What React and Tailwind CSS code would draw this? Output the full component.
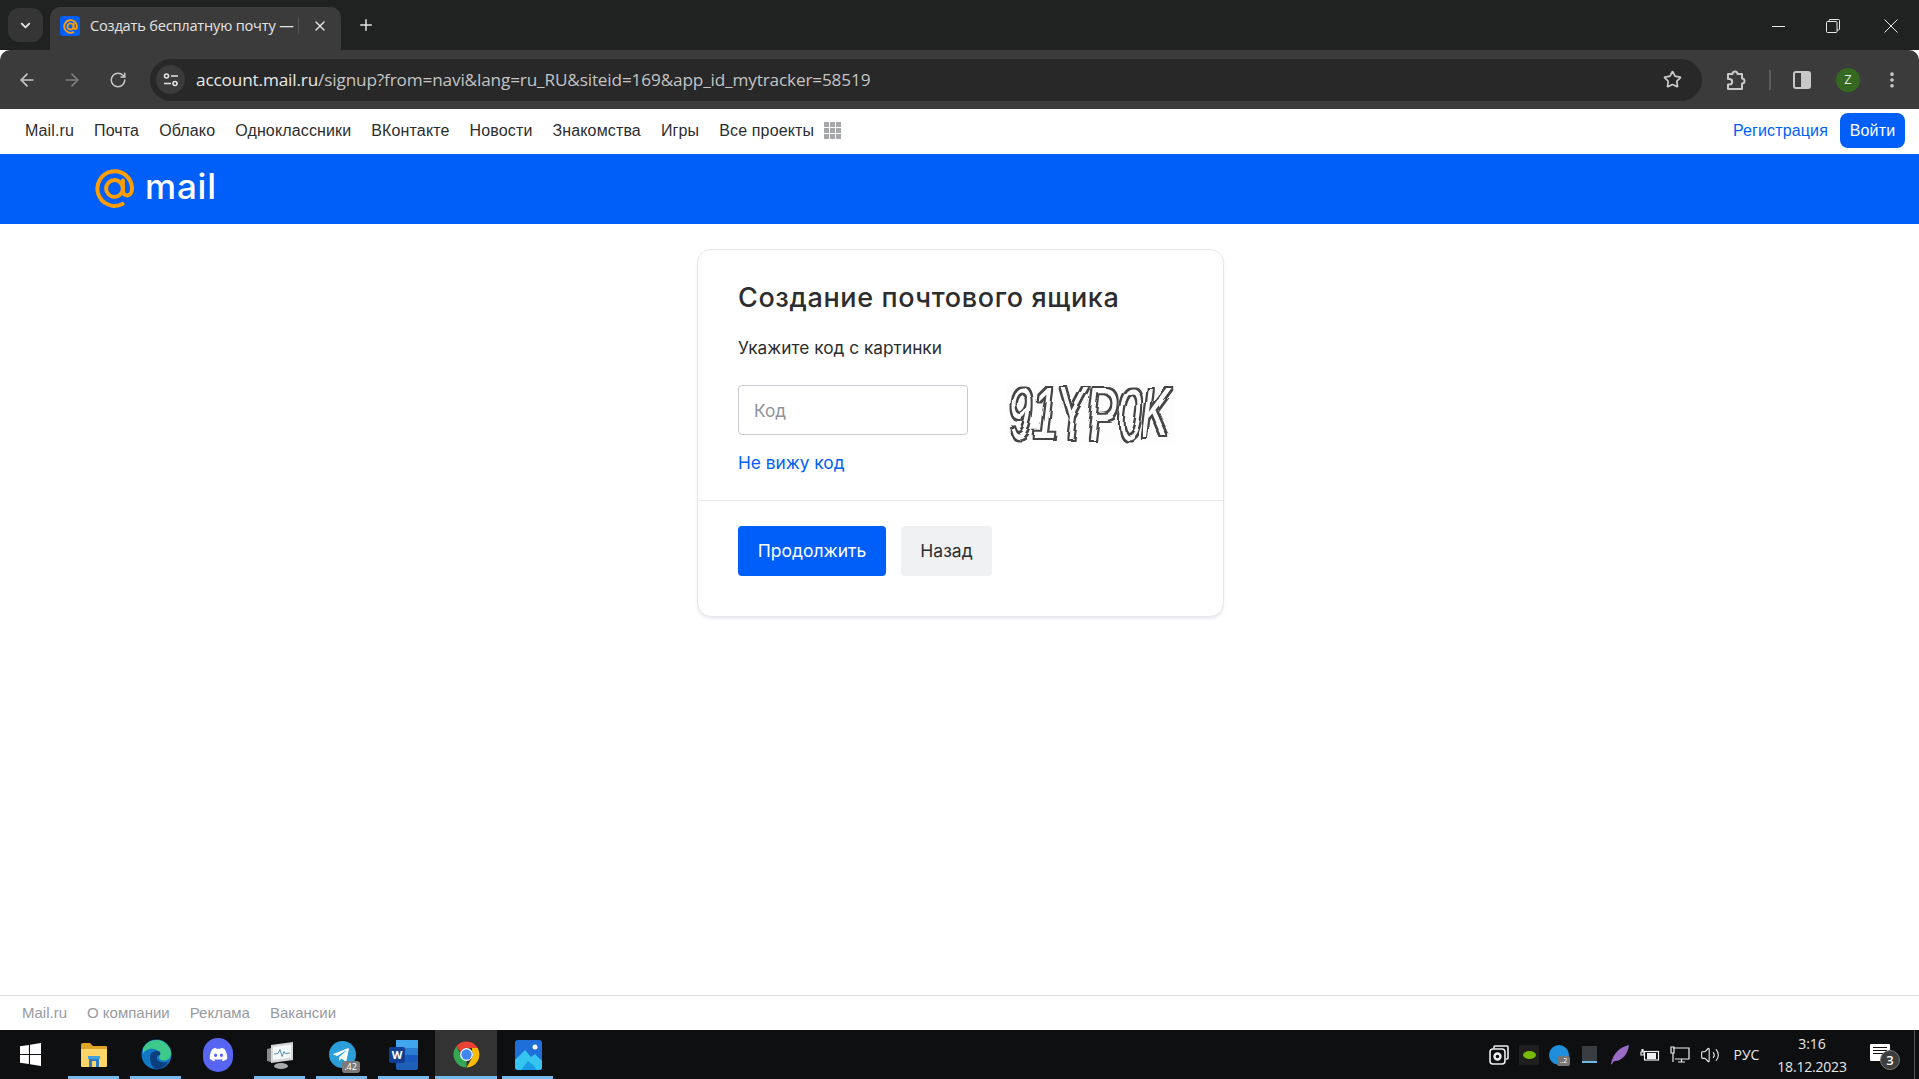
import React from "react";
import {
  ArrowLeft,
  ArrowRight,
  RotateCw,
  Star,
  EllipsisVertical,
  ChevronDown,
  X,
  Plus,
  Volume2,
} from "lucide-react";
import { FaDiscord, FaTelegramPlane } from "react-icons/fa";

const navLinks = ["Mail.ru", "Почта", "Облако", "Одноклассники", "ВКонтакте", "Новости", "Знакомства", "Игры", "Все проекты"];
const footerLinks = ["Mail.ru", "О компании", "Реклама", "Вакансии"];

const AtSign = ({ className, width = 4 }) => (
  <svg viewBox="0 0 41 39" className={className} fill="none" stroke="#ff9e00" strokeWidth={width} strokeLinecap="round">
    <circle cx="20.5" cy="19.5" r="8.4" />
    <path d="M28.5 35 A17.3 17.3 0 1 1 38 19.5 C38 24 36 26.4 33.2 26.4 C30.4 26.4 28.9 24.4 28.9 21.4 L28.9 11.5" />
  </svg>
);

const WindowControls = () => (
  <div className="ml-auto flex items-center h-[48px] text-[#e8e8e8]">
    <div className="w-[50px] flex justify-center">
      <div className="w-[13px] h-px bg-[#e8e8e8]" />
    </div>
    <div className="w-[60px] flex justify-center">
      <svg width="14" height="14" viewBox="0 0 14 14" fill="none" stroke="#e8e8e8">
        <rect x="0.5" y="2.5" width="10.5" height="11" rx="1" />
        <path d="M3 2.5V1.5a1 1 0 0 1 1-1h8.5a1 1 0 0 1 1 1V10a1 1 0 0 1-1 1H11" />
      </svg>
    </div>
    <div className="w-[56px] flex justify-center">
      <svg width="14" height="14" viewBox="0 0 14 14" stroke="#e8e8e8">
        <path d="M0.5 0.5l13 13M13.5 0.5l-13 13" />
      </svg>
    </div>
  </div>
);

const TabStrip = () => (
  <div className="h-[50px] bg-[#202221] flex items-end pl-2">
    <div className="w-[35px] h-[34px] mb-[8px] rounded-[11px] bg-[#343534] flex items-center justify-center">
      <ChevronDown size={15} strokeWidth={3} className="text-[#e4e4e4]" />
    </div>
    <div className="relative ml-[7px] w-[291px] h-[43px] bg-[#3b3b3b] rounded-t-[10px] flex items-center pl-[10px] pb-[5px]">
      <div className="w-[20px] h-[20px] rounded-[3px] bg-[#005ff9] flex items-center justify-center">
        <AtSign className="w-[15px] h-[15px]" width={5} />
      </div>
      <div className="ml-[10px] w-[204px] overflow-hidden whitespace-nowrap font-['Open_Sans',sans-serif] text-[14.6px] tracking-[-0.2px] text-[#e3e3e3]">
        Создать бесплатную почту — Mail
      </div>
      <div className="ml-[4px] w-px h-[16px] bg-[#555]" />
      <X size={16} strokeWidth={2} className="ml-[13px] text-[#e3e3e3]" />
    </div>
    <Plus size={18} strokeWidth={2} className="ml-[16px] mb-[16px] text-[#e3e3e3]" />
    <WindowControls />
  </div>
);

const Toolbar = () => (
  <div className="h-[59px] bg-[#3b3b3b] rounded-t-[10px] flex items-center pl-[17px]">
    <ArrowLeft size={20} strokeWidth={2} className="text-[#c8c8c8]" />
    <ArrowRight size={20} strokeWidth={2} className="ml-[25px] text-[#7f7f7f]" />
    <RotateCw size={18} strokeWidth={2} className="ml-[27px] text-[#c8c8c8]" />
    <div className="ml-[23px] w-[1552px] h-[42px] rounded-full bg-[#282828] flex items-center pl-[6px]">
      <div className="w-[29px] h-[29px] rounded-full bg-[#3b3b3b] flex items-center justify-center">
        <svg width="16" height="14" viewBox="0 0 16 14" fill="none" stroke="#e3e3e3" strokeWidth="1.6">
          <circle cx="3.5" cy="3" r="2" />
          <path d="M8 3h7M1 10.5h7" />
          <circle cx="12" cy="10.5" r="2" />
        </svg>
      </div>
      <div className="ml-[11px] font-['Open_Sans',sans-serif] text-[17.2px] whitespace-nowrap text-[#c4c4c4] tracking-[-0.15px]">
        <span className="text-[#e8e8e8]">account.mail.ru</span>/signup?from=navi&amp;lang=ru_RU&amp;siteid=169&amp;app_id_mytracker=58519
      </div>
      <Star size={19} strokeWidth={2.2} className="ml-auto mr-[20px] text-[#c8c8c8]" />
    </div>
    <svg width="22" height="22" viewBox="0 0 22 22" fill="none" stroke="#c8c8c8" strokeWidth="2" strokeLinejoin="round" className="ml-[23px]">
      <path d="M3 5h4.500a2.500 2.500 0 0 1 5 0H17v4.500a2.500 2.500 0 0 1 0 5V20H3v-4.500h1.500a2.700 2.700 0 0 0 0-5.400H3z" />
    </svg>
    <div className="ml-[22px] w-[2px] h-[20px] bg-[#5c5c5c]" />
    <div className="ml-[22px] w-[18px] h-[18px] rounded-[3px] border-2 border-[#c8c8c8] flex justify-end">
      <div className="w-[8px] bg-[#c8c8c8]" />
    </div>
    <div className="ml-[25px] w-[24px] h-[24px] rounded-full bg-[#35691f] flex items-center justify-center text-[#e8e8e8] text-[13px] font-['Open_Sans',sans-serif]">
      Z
    </div>
    <EllipsisVertical size={20} strokeWidth={2.4} className="ml-[22px] text-[#c8c8c8]" />
  </div>
);

const ProjectNav = () => (
  <div className="h-[45px] bg-white flex items-center pl-[25px] pr-[14px] pb-[2px] font-['Liberation_Sans',Arial,sans-serif] text-[16px] tracking-[0.14px] text-[#2c2d2e]">
    <div className="flex items-center gap-5">
      {navLinks.map((link) => (
        <span key={link}>{link}</span>
      ))}
    </div>
    <div className="ml-[10px] grid grid-cols-3 gap-[1px]">
      {Array.from({ length: 9 }).map((_, i) => (
        <div key={i} className="w-[5px] h-[5px] bg-[#a5a7ab]" />
      ))}
    </div>
    <span className="ml-auto text-[#005ff9]">Регистрация</span>
    <div className="ml-3 w-[65px] h-[35px] rounded-lg bg-[#005ff9] text-white flex items-center justify-center">Войти</div>
  </div>
);

const LogoBar = () => (
  <div className="h-[70px] bg-[#005ff9] flex items-start pl-[94px] pt-[15px]">
    <AtSign className="w-[41px] h-[39px]" />
    <span className="ml-[10px] -mt-[7px] font-['Inter',sans-serif] font-medium text-[35px] leading-[48px] tracking-[0.8px] text-white">mail</span>
  </div>
);

// the captcha is one distorted text line: a ring around the letters, wobbled by noise
const Captcha = () => (
  <div className="w-[168px] h-[65px] bg-[#fdfdfd] ml-[39px] -mt-[5px] -mb-[10px]">
    <svg viewBox="0 0 168 65" className="w-full h-full">
      <defs>
        <filter id="wobble" x="-10%" y="-20%" width="120%" height="140%">
          <feMorphology in="SourceGraphic" operator="dilate" radius="1.7" result="fat" />
          <feComposite in="fat" in2="SourceGraphic" operator="out" result="ring" />
          <feTurbulence type="fractalNoise" baseFrequency="0.025" numOctaves="1" seed="8" result="noise" />
          <feDisplacementMap in="ring" in2="noise" scale="16" />
        </filter>
      </defs>
      <text
        x="2"
        y="58"
        filter="url(#wobble)"
        fontFamily="'Liberation Sans', sans-serif"
        fontStyle="italic"
        fontSize="70"
        fill="#444444"
        textLength="162"
        lengthAdjust="spacingAndGlyphs"
      >
        91YP0K
      </text>
    </svg>
  </div>
);

const SignupCard = () => (
  <div className="pl-[2px] pt-[25px]">
    <div className="w-[527px] h-[368px] mx-auto border border-[#e7e8ea] rounded-[14px] shadow-[0_2px_3px_rgba(0,16,61,0.08)] bg-white flex flex-col font-['Inter',sans-serif] text-[#2c2d2e]">
      <div className="pl-[40px] pr-[39px] pt-[30px] border-b border-[#e7e8ea] h-[251px]">
        <h1 className="text-[27px] leading-[36px] font-medium tracking-[0.62px] whitespace-nowrap">Создание почтового ящика</h1>
        <p className="mt-[20px] text-[17.3px] leading-[24px]">Укажите код с картинки</p>
        <div className="mt-[25px] flex items-start">
          <input
            placeholder="Код"
            className="w-[230px] h-[50px] rounded-[4px] border border-[#c9cbd0] px-[15px] text-[17.3px] placeholder:text-[#8f9299] outline-none"
          />
          <Captcha />
        </div>
        <a className="block mt-[16px] text-[17.3px] leading-[24px] text-[#005ff9]">Не вижу код</a>
      </div>
      <div className="pl-[40px] pr-[39px] pt-[25px] flex gap-[15px]">
        <button className="w-[148px] h-[50px] rounded-[4px] bg-[#005ff9] text-white text-[17.5px]">Продолжить</button>
        <button className="w-[91px] h-[50px] rounded-[4px] bg-[#f0f1f3] text-[17.5px]">Назад</button>
      </div>
    </div>
  </div>
);

const Footer = () => (
  <div className="h-[35px] border-t border-[#dcdddf] bg-white flex items-center gap-5 pl-[22px] font-['Liberation_Sans',Arial,sans-serif] text-[15px] text-[#979a9f]">
    {footerLinks.map((link) => (
      <span key={link}>{link}</span>
    ))}
  </div>
);

const TaskSlot = ({ open, active, children }) => (
  <div className={`relative w-[62px] h-full flex items-center justify-center ${active ? "bg-[#333333]" : ""}`}>
    {children}
    {open && <div className={`absolute bottom-0 h-[3px] bg-[#76b9ed] ${active ? "left-0 right-0" : "left-[5px] right-[6px]"}`} />}
  </div>
);

const ChromeIcon = () => (
  <svg width="31" height="31" viewBox="0 0 48 48">
    <path d="M24 4a20 20 0 0 1 17.3 10H24a10 10 0 0 0-9.3 6.3L8.2 11.8A20 20 0 0 1 24 4z" fill="#ea4335" />
    <path d="M41.3 14A20 20 0 0 1 24 44l8.6-15a10 10 0 0 0 .1-10l-.1-5z" fill="#fbbc04" />
    <path d="M8.2 11.8l8.7 15a10 10 0 0 0 7.1 7.2h.1L24 44A20 20 0 0 1 8.2 11.8z" fill="#34a853" />
    <circle cx="24" cy="24" r="10" fill="#fff" />
    <circle cx="24" cy="24" r="8" fill="#4285f4" />
  </svg>
);

const TrayIcons = () => (
  <div className="flex items-center gap-[10px]">
    <svg width="20" height="20" viewBox="0 0 20 20" fill="none" stroke="#eee" strokeWidth="1.6">
      <path d="M5 3.500V2a1 1 0 0 1 1-1h12a1 1 0 0 1 1 1v11a1 1 0 0 1-1 1h-1" />
      <rect x="1" y="4" width="15" height="15" rx="3" />
      <circle cx="8.500" cy="11.500" r="3" strokeWidth="2.4" />
    </svg>
    <div className="w-[20px] h-[20px] bg-[#1e1f1e] flex items-center justify-center">
      <div className="w-[13px] h-[8px] rounded-[50%] bg-[#76b900]" />
    </div>
    <div className="relative w-[20px] h-[20px] rounded-full bg-[#1f8fdc]">
      <div className="absolute -right-[1px] -bottom-[1px] w-[13px] h-[10px] rounded-[2px] bg-[#777] text-[7px] leading-[10px] text-center text-white">..2</div>
    </div>
    <div className="w-[15px] h-[17px] mx-[3px] bg-[#3a3d40] border-b-2 border-[#6fb9ea]" />
    <svg width="20" height="20" viewBox="0 0 20 20">
      <path d="M19 0C10 2 3 8 1 19c0 .5 1 .5 1 0 1-2 2-3 3-3 7 0 13-7 14-16z" fill="#9a6ac9" />
    </svg>
    <svg width="20" height="14" viewBox="0 0 20 14" fill="none" stroke="#eee" strokeWidth="1.2">
      <rect x="4.500" y="3.500" width="14" height="8.500" />
      <rect x="7" y="5" width="9" height="6" fill="#eee" stroke="none" />
      <path d="M1 4h3v3H1zM2 1v3M3 1v3" />
    </svg>
    <svg width="20" height="17" viewBox="0 0 20 17" fill="none" stroke="#eee" strokeWidth="1.2">
      <path d="M3 2h16v11H5" />
      <path d="M1 1h3v6H1zM3 7v9M8 16h7M11.500 13v3" />
    </svg>
    <Volume2 size={20} strokeWidth={1.3} className="text-[#eee]" />
  </div>
);

const Taskbar = () => (
  <div className="h-[49px] bg-[#0e0f10] flex items-center text-[#e8e8e8] font-['Open_Sans',sans-serif]">
    <div className="w-[63px] h-full flex items-center pl-[20px]">
      <svg width="21" height="23" viewBox="0 0 21 23" fill="#fff">
        <path d="M0 3.3l8.9-1.3v9H0zM10 1.8L21 0v11h-11zM0 12h8.9v9L0 19.7zM10 12h11v11l-11-1.8z" />
      </svg>
    </div>
    <TaskSlot open>
      <svg width="28" height="26" viewBox="0 0 28 26">
        <path d="M1 3a2 2 0 0 1 2-2h7l3 3h13a1 1 0 0 1 1 1v3H1z" fill="#e0a526" />
        <path d="M1 7h26v17a1 1 0 0 1-1 1H2a1 1 0 0 1-1-1z" fill="#fdd569" />
        <path d="M8 14h12v3H8z" fill="#3f9fe0" />
        <path d="M9 17h10v8H9z" fill="#2b7cc2" />
        <path d="M12 19h4v6h-4z" fill="#fdd569" />
      </svg>
    </TaskSlot>
    <TaskSlot open>
      <svg width="31" height="31" viewBox="0 0 31 31">
        <circle cx="15.5" cy="15.5" r="15" fill="#1277c4" />
        <path d="M2 9A15 15 0 0 1 30 13c.8 5-2.5 8.5-7 8.5-3 0-5-1-5-3 1-3 2-6-3-8C9 8.500 4 11 2 15z" fill="#3dc98a" />
        <path d="M9 18c0-4 3-6 7-6 3 0 4 2 3 4-4 0-5 5 1 7 3 1 5 .6 7-.5A15 15 0 0 1 15 30.500C10 28 9 22 9 18z" fill="#0b3f7d" />
      </svg>
    </TaskSlot>
    <TaskSlot>
      <div className="w-[30px] h-[34px] rounded-full bg-[#5865f2] flex items-center justify-center">
        <FaDiscord size={19} className="text-white" />
      </div>
    </TaskSlot>
    <TaskSlot open>
      <svg width="28" height="30" viewBox="0 0 28 30">
        <ellipse cx="15" cy="26" rx="7" ry="3" fill="#a9a9a9" />
        <path d="M5 5l22-3v18l-22 3z" fill="#d5d5d5" />
        <path d="M7 7l18-2.500v13l-18 2.500z" fill="#f4f7f8" />
        <path d="M8 14l4-.5 2-4 2 7 2-5 1 2 5-.5" fill="none" stroke="#5a93b5" strokeWidth="1" />
        <path d="M1 9l4-1v14l-4-1z" fill="#8a8a8a" />
      </svg>
    </TaskSlot>
    <TaskSlot open>
      <div className="relative">
        <div className="w-[27px] h-[27px] rounded-full bg-[#2a9fd9] flex items-center justify-center">
          <FaTelegramPlane size={18} className="text-white -ml-[2px]" />
        </div>
        <div className="absolute -right-[4px] -bottom-[5px] w-[18px] h-[12px] rounded-[3px] bg-[#7a7a7a] text-[9px] leading-[12px] text-center text-white">.42</div>
      </div>
    </TaskSlot>
    <TaskSlot open>
      <div className="relative w-[29px] h-[30px] -ml-[1px]">
        <div className="absolute right-0 top-0 w-[22px] h-[30px] rounded-[2px] bg-[#1f5fb8]">
          <div className="h-[8px] bg-[#41a5ee]" />
          <div className="h-[7px] bg-[#2b7cd3]" />
          <div className="h-[7px] bg-[#185abd]" />
        </div>
        <div className="absolute left-0 top-[7px] w-[16px] h-[16px] rounded-[2px] bg-[#103f91] text-white text-[11px] leading-[16px] text-center font-bold">W</div>
      </div>
    </TaskSlot>
    <TaskSlot open active>
      <ChromeIcon />
    </TaskSlot>
    <TaskSlot open>
      <svg width="27" height="30" viewBox="0 0 27 30">
        <rect width="27" height="30" rx="3" fill="#1f6fd8" />
        <path d="M0 27V20L10 10l6 7 4-3 7 7v6a3 3 0 0 1-3 3H3a3 3 0 0 1-3-3z" fill="#35c5f0" />
        <path d="M6 30l7-9 5 4 4 5z" fill="#1a9be6" />
        <circle cx="20" cy="7" r="2.500" fill="#fff" />
      </svg>
    </TaskSlot>
    <div className="ml-auto flex items-center h-full">
      <TrayIcons />
      <span className="w-[47px] ml-[3px] text-center text-[14px]">РУС</span>
      <div className="w-[90px] -ml-[3px] text-center text-[14px] leading-[23px]">
        <div>3:16</div>
        <div className="tracking-[-0.2px]">18.12.2023</div>
      </div>
      <div className="relative w-[20px] h-[17px] ml-[13px] -mt-[4px] bg-white rounded-[1px] flex flex-col gap-[2px] px-[3px] pt-[3px]">
        <div className="h-px bg-[#111]" />
        <div className="h-px bg-[#111]" />
        <div className="h-px bg-[#111]" />
        <div className="absolute -right-[10px] -bottom-[9px] w-[20px] h-[20px] rounded-full bg-[#3d3d3d] border border-[#777] text-white text-[13px] leading-[18px] text-center font-semibold">3</div>
      </div>
      <div className="w-px h-full ml-[24px] mr-[4px] bg-[#555]" />
    </div>
  </div>
);

export default function App() {
  return (
    <div className="h-[1079px] flex flex-col overflow-hidden bg-white">
      <TabStrip />
      <Toolbar />
      <ProjectNav />
      <LogoBar />
      <div className="flex-1">
        <SignupCard />
      </div>
      <Footer />
      <Taskbar />
    </div>
  );
}
